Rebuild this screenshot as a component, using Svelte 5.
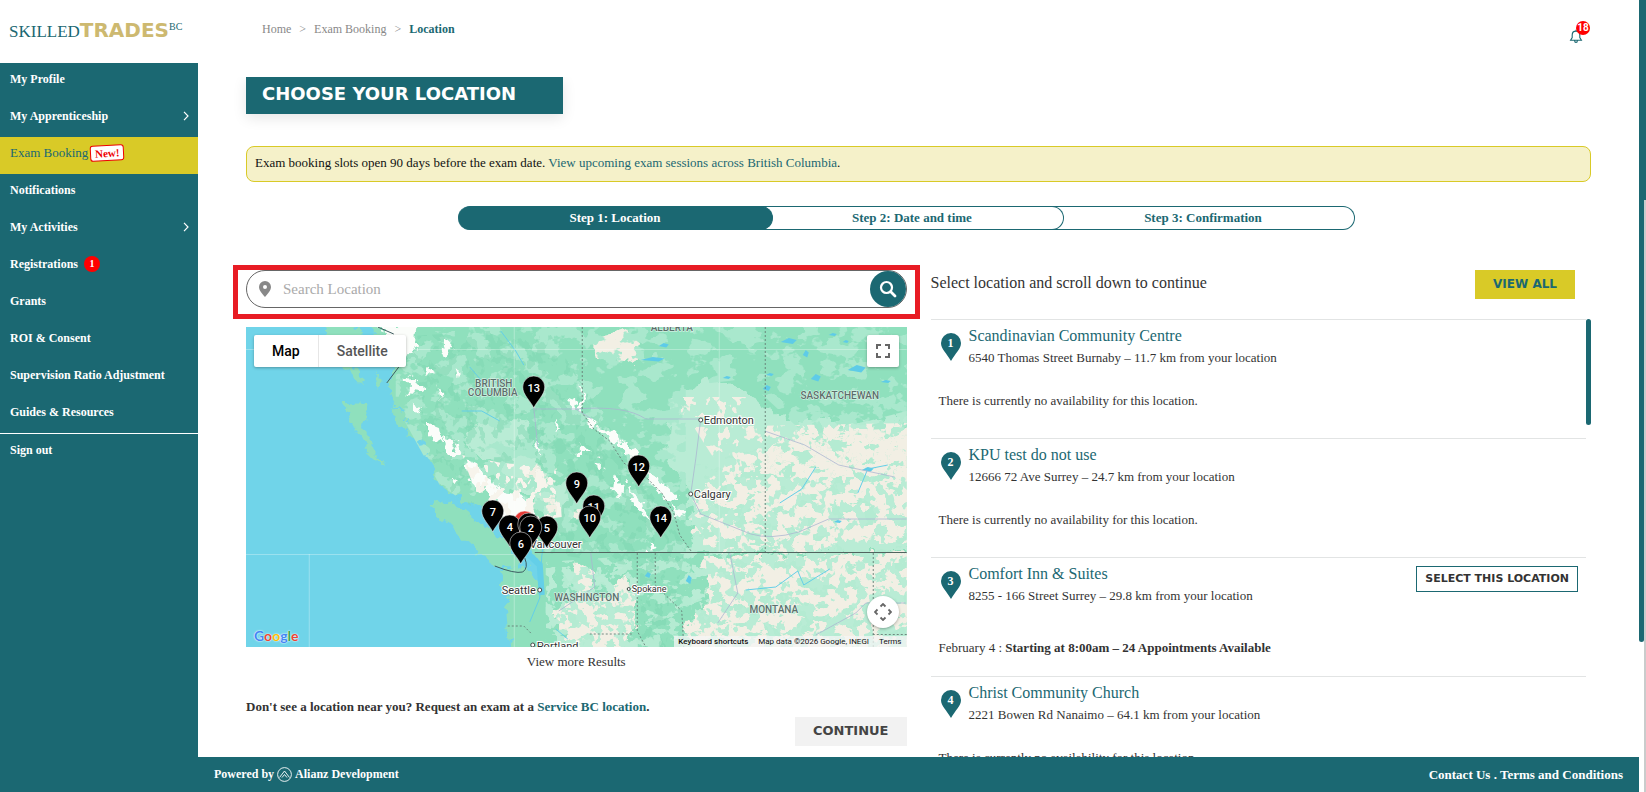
<script lang="ts">
  type NavItem = { label: string; arrow?: boolean; active?: boolean; isNew?: boolean; count?: number };
  type Site = { name: string; address: string; date?: string; slots?: string };
  type Marker = { x: number; y: number; label: string; red?: boolean };

  let search = $state('');
  let mapType = $state('map');
  let selected = $state<number | null>(null);

  const nav: NavItem[] = [
    { label: 'My Profile' },
    { label: 'My Apprenticeship', arrow: true },
    { label: 'Exam Booking', active: true, isNew: true },
    { label: 'Notifications' },
    { label: 'My Activities', arrow: true },
    { label: 'Registrations', count: 1 },
    { label: 'Grants' },
    { label: 'ROI & Consent' },
    { label: 'Supervision Ratio Adjustment' },
    { label: 'Guides & Resources' }
  ];

  const steps = ['Step 1: Location', 'Step 2: Date and time', 'Step 3: Confirmation'];

  const sites: Site[] = [
    { name: 'Scandinavian Community Centre', address: '6540 Thomas Street Burnaby – 11.7 km from your location' },
    { name: 'KPU test do not use', address: '12666 72 Ave Surrey – 24.7 km from your location' },
    { name: 'Comfort Inn & Suites', address: '8255 - 166 Street Surrey – 29.8 km from your location', date: 'February 4', slots: 'Starting at 8:00am – 24 Appointments Available' },
    { name: 'Christ Community Church', address: '2221 Bowen Rd Nanaimo – 64.1 km from your location' }
  ];

  // drawn in order, the last one is on top
  const markers: Marker[] = [
    { x: 288, y: 61, label: '13' },
    { x: 393, y: 140, label: '12' },
    { x: 331, y: 157, label: '9' },
    { x: 348, y: 180, label: '11' },
    { x: 344, y: 191, label: '10' },
    { x: 415, y: 191, label: '14' },
    { x: 247, y: 185, label: '7' },
    { x: 279, y: 196, label: '', red: true },
    { x: 301, y: 201, label: '5' },
    { x: 264, y: 200, label: '4' },
    { x: 283, y: 198, label: '3' },
    { x: 285, y: 201, label: '2' },
    { x: 275, y: 217, label: '6' }
  ];

  const regions = [
    { x: 248, y: 60, text: 'BRITISH' },
    { x: 247, y: 69, text: 'COLUMBIA' },
    { x: 426, y: 4, text: 'ALBERTA' },
    { x: 594, y: 72, text: 'SASKATCHEWAN' },
    { x: 341, y: 274, text: 'WASHINGTON' },
    { x: 528, y: 286, text: 'MONTANA' }
  ];

  const lakes = [[407, 33, 12, 3], [418, 19, 5, 3], [611, 43, 9, 5], [521, 62, 4, 4], [543, 15, 8, 4], [570, 52, 5, 5], [622, 143, 6, 3], [592, 195, 4, 2], [443, 254, 3, 6], [402, 249, 3, 4], [524, 48, 4, 2], [640, 55, 5, 2], [600, 15, 3, 2], [481, 51, 4, 2], [587, 8, 4, 2], [560, 28, 3, 5]];
</script>

<div class="page">
  <aside class="sidebar">
    <a class="logo" href="#home"><span class="logo-skilled">SKILLED</span><span class="logo-trades">TRADES</span><sup>BC</sup></a>
    <nav>
      {#each nav as item}
        <a class="nav-item" class:active={item.active} href="#nav">
          <span>{item.label}</span>
          {#if item.isNew}<span class="new-tag">New!</span>{/if}
          {#if item.count}<span class="count">{item.count}</span>{/if}
          {#if item.arrow}
            <svg class="arrow" width="6" height="10" viewBox="0 0 6 10"><path d="M1 .8 5 5 1 9.2" fill="none" stroke="#fff" stroke-width="1.2" /></svg>
          {/if}
        </a>
      {/each}
      <a class="nav-item sign-out" href="#signout">Sign out</a>
    </nav>
  </aside>

  <div class="body">
    <header class="topbar">
      <div class="crumbs">
        <a href="#home">Home</a><span>&gt;</span><a href="#exam">Exam Booking</a><span>&gt;</span><strong>Location</strong>
      </div>
      <button class="bell" aria-label="Notifications">
        <svg width="14" height="15" viewBox="0 0 14 15" fill="none" stroke="#1b6872" stroke-width="1.1">
          <path d="M7 2.1C4.6 2.1 3.2 3.8 3.2 6v2.6L1.6 11.2h10.8L10.8 8.6V6C10.8 3.8 9.4 2.1 7 2.1zM7 2.1V.8M5.6 11.4c0 2.6 2.8 2.6 2.8 0" />
        </svg>
        <span class="bell-count">18</span>
      </button>
    </header>

    <main>
      <h1>CHOOSE YOUR LOCATION</h1>
      <p class="notice">Exam booking slots open 90 days before the exam date. <a href="#sessions">View upcoming exam sessions across British Columbia</a>.</p>

      <ol class="steps">
        {#each steps as step, i}
          <li class:current={i === 0}>{step}</li>
        {/each}
      </ol>

      <div class="columns">
        <section class="left">
          <div class="search-frame">
            <div class="search">
              <svg width="12" height="16" viewBox="0 0 12 16"><path fill="#888" fill-rule="evenodd" d="M6 0a6 6 0 0 0-6 6c0 3.5 3.6 7.2 6 10 2.4-2.8 6-6.5 6-10a6 6 0 0 0-6-6zm0 4a2 2 0 1 1 0 4 2 2 0 0 1 0-4z" /></svg>
              <input type="text" placeholder="Search Location" aria-label="Search Location" bind:value={search} />
              <button aria-label="Search">
                <svg width="18" height="18" viewBox="0 0 18 18" fill="none" stroke="#fff" stroke-width="2.2"><circle cx="7.5" cy="7.5" r="5.5" /><path stroke-width="2.8" stroke-linecap="round" d="m12 12 4 4" /></svg>
              </button>
            </div>
          </div>

          <div class="map">
            <svg class="map-canvas" viewBox="0 0 661 320" preserveAspectRatio="xMidYMid slice">
              <defs>
                <filter id="rough" x="-5%" y="-5%" width="110%" height="110%">
                  <feTurbulence type="fractalNoise" baseFrequency="0.09" numOctaves="3" seed="4" />
                  <feDisplacementMap in="SourceGraphic" scale="17" xChannelSelector="R" yChannelSelector="G" />
                </filter>
                <filter id="patch" x="0" y="0" width="100%" height="100%">
                  <feTurbulence type="fractalNoise" baseFrequency="0.045 0.06" numOctaves="4" seed="12" />
                  <feColorMatrix values="0 0 0 0 0  0 0 0 0 0  0 0 0 0 0  24 0 0 0 -12.5" result="n" />
                  <feComposite in="SourceGraphic" in2="n" operator="in" />
                </filter>
                <filter id="sparse" x="0" y="0" width="100%" height="100%">
                  <feTurbulence type="fractalNoise" baseFrequency="0.06 0.09" numOctaves="4" seed="8" />
                  <feColorMatrix values="0 0 0 0 0  0 0 0 0 0  0 0 0 0 0  24 0 0 0 -13.2" result="n" />
                  <feComposite in="SourceGraphic" in2="n" operator="in" />
                </filter>
                <filter id="speck" x="0" y="0" width="100%" height="100%">
                  <feTurbulence type="fractalNoise" baseFrequency="0.1 0.08" numOctaves="3" seed="31" />
                  <feColorMatrix values="0 0 0 0 0  0 0 0 0 0  0 0 0 0 0  0 24 0 0 -13" result="n" />
                  <feComposite in="SourceGraphic" in2="n" operator="in" />
                </filter>
              </defs>

              <rect width="661" height="320" fill="#70d4e9" />
              <g filter="url(#rough)">
                <path fill="#8fe0bd" d="M128-10 128 8 141 24 148 40 142 56 150 78 164 96 175 112 186 136 194 158 218 172 242 182 262 198 282 218 294 236 292 252 286 246 272 240 253 244 258 262 262 282 266 330 670 330V-10z" />
                <path fill="#8fe0bd" d="M97 75 122 76 118 98 126 118 137 140 124 128 108 98zM184 175 200 177 218 184 240 198 258 212 276 232 274 241 252 240 232 226 214 208 196 190zM76-2h34l4 14-24 2zM98 38l16 2 3 15-12-2zM112 10l14 4-2 26-10-8zM128 42l8 12-4 10zM148 78l16 20 6 14-10-4-14-22zM88 22l12 6-4 8z" />
                <path fill="#b9ecd5" d="M216 104 246 92 282 96 290 130 306 160 324 150 330 190 306 200 286 170 262 158 246 132 224 128zM424 72 462 52 500 64 540 92 600 92 661 98V225H450L444 190 444 166 420 130z" />
              </g>
              <path d="M200 171 222 176 250 194 272 214" fill="none" stroke="#70d4e9" stroke-width="3" filter="url(#rough)" />
              <g filter="url(#rough)" fill="#f2efe4">
                <path d="M346 10 376 2 394 12 390 38 366 32 350 26zM450 168 470 150 500 142 516 128 548 110 600 104 670 98V214L600 218 560 224 470 222 446 202z" />
                <path d="M324 234 346 240 348 276 380 250 392 272 388 304 372 324 328 330 316 300 306 282 332 272zM458 230 670 226V330H450L440 302 462 276zM296 170l14 0 4 14-12 2zM276 142l18-2 8 14-6 12-10-10zM326 172l12 4-2 18-8-6z" />
              </g>

              <path filter="url(#patch)" fill="#a9e8cd" d="M150 0H440V225H294L194 158 150 78z" />
              <path filter="url(#patch)" fill="#a9e8cd" d="M430 0H661V100L560 108 500 52 430 60z" />
              <path filter="url(#sparse)" fill="#b4ebd2" d="M440 225V140L661 84V320H300V235z" />
              <path filter="url(#speck)" fill="#b9ecd5" d="M446 225V140L661 84V225z" />
              <path filter="url(#speck)" fill="#7dd6b0" d="M150 10 300 0 440 220 420 320 396 320 394 240 294 225 194 158z" opacity=".45" />
              <path filter="url(#speck)" fill="#b9ecd5" d="M446 226H661V320H446zM300 240H392V320H300z" />
              <path filter="url(#speck)" fill="#f2efe4" d="M448 100 661 96V150H480zM430 70H500V90H430z" />

              <!-- coastal range and Rockies -->
              <g filter="url(#rough)" fill="#fbfdfa">
                <path d="M124-4 172-2 170 22 158 28 148 12zM162 50l12 6 2 12-14-2zM184 96l10 4 2 16-10-4zM196 110l14 4 4 16-12 0zM220 132l14 6 8 24-18-6zM236 148l16 8 12 20-12 2-14-14zM252 164l22 4 14 14-4 18-24-4-10-18zM199 12l10 10-8 8-4-10zM168 74l9 4-4 12zM290 112l7 6-2 10zM334 52l5 32-5-2zM180 38l8 4-2 8zM192 56l7 6-4 8zM210 40l6 4-4 8zM206 148l6 4-4 6z" />
                <path d="M348 100l18 2 12 12-10 4zM374 114l16 8 8 16-14-2zM400 144l16 10 16 16-8 4-22-18zM370 148l8 10-2 16-8-8zM382 162l14 10 6 20-12-10zM426 172l10 14-2 8zM322 72l10 4-4 8zM334 118l10 10-10 0zM400 212l10 10-6 2zM340 92l10 4-6 6zM310 96l7 4-5 4zM352 134l7 6-6 4z" />
              </g>
              <path filter="url(#speck)" fill="#f7f4ec" d="M216 128 256 136 312 140 316 190 270 196 232 170z" />

              <g fill="#5ecbe8">
                {#each lakes as [x, y, w, h]}
                  <path d="M{x - w} {y}l{w} {-h} {w} {h / 2} {-w / 2} {h}z" />
                {/each}
              </g>
              <g fill="none" stroke="#64cfe8" stroke-width="1">
                <path d="M255 4 270 24 278 38M224 40l24 28M216 84l20 0 18 10M500 263l30-3 22-16 6 14 26-16M570 140l-14 22-22 14M612 166l10-24 20-4M322 312l-12-10M300 205l-4 24-2 42-10 24" />
                <path stroke-width="6" d="M277 222 294 238 296 268" />
              </g>
              <g fill="none" stroke="#a9b4d0" stroke-width="1" opacity=".75">
                <path d="M330 82q50-4 70 10H455l-5 40-5 35 10 20 50 20q20 6 48-2l30-13H661M519 104l40 14 34 20 56 12M288 82l42 0 16 10M484 226l8 40-20 30M570 308l40-22 10-10h40M288 80l4 40M345 226l4 34-36 24" />
              </g>

              <g fill="none" stroke="#fff" opacity=".3">
                <path d="M0 22.500H661M63.500 227V320M0 227.500H268M268.500 0V320M473.500 0V225" />
              </g>
              <g fill="none" stroke="#667e76" stroke-width=".9" stroke-dasharray="2 2">
                <path d="M519.500 0V225M336.500 0V86L348 102 364 114 378 136 400 150 416 166 428 186 434 208 446 225M391.500 226V304L400 320M409.500 226V258L436 284 438 320M627.500 226V320M627 307.500H661M262 299h16l8 8M344 307h44" />
              </g>
              <path d="M289 225.500H661" stroke="#52645f" />
              <path d="M249 239q20 8 28 6 6-4 2-14M141 56l12-16M132 0l16 7" fill="none" stroke="#3d5c61" />

              <g class="region">
                {#each regions as r}<text x={r.x} y={r.y}>{r.text}</text>{/each}
              </g>
              <g class="city">
                <text x="458" y="97">Edmonton</text>
                <text x="448" y="171">Calgary</text>
                <text x="256" y="267">Seattle</text>
                <text x="284" y="221">Vancouver</text>
                <text x="291" y="323">Portland</text>
                <text class="small" x="386" y="265">Spokane</text>
              </g>
              <g fill="#fff" stroke="#4a4a4a">
                <circle cx="455" cy="93" r="2" /><circle cx="445" cy="167" r="2" /><circle cx="294" cy="263" r="2" /><circle cx="383" cy="262" r="1.5" /><circle cx="287" cy="318" r="2" />
              </g>

              {#each markers as m}
                <g class="marker" transform="translate({m.x} {m.y})">
                  <path d="M0 20C-3 13-11 7-11-1a11 11 0 0 1 22 0c0 8-8 14-11 21z" fill={m.red ? '#e53935' : '#000'} stroke="#fff" stroke-width=".5" />
                  <text y="4">{m.label}</text>
                </g>
              {/each}
            </svg>

            <div class="map-type">
              <button class:on={mapType === 'map'} onclick={() => (mapType = 'map')}>Map</button>
              <button class:on={mapType === 'satellite'} onclick={() => (mapType = 'satellite')}>Satellite</button>
            </div>
            <button class="fullscreen" aria-label="Toggle fullscreen view">
              <svg width="14" height="14" viewBox="0 0 14 14" fill="none" stroke="#666" stroke-width="2"><path d="M1 5V1h4M9 1h4v4M13 9v4H9M5 13H1V9" /></svg>
            </button>
            <button class="camera" aria-label="Map camera controls">
              <svg width="18" height="18" viewBox="0 0 18 18" fill="none" stroke="#666" stroke-width="1.8"><path d="M6.5 3.5 9 1l2.500 2.500M6.500 14.500 9 17l2.500-2.500M3.500 6.500 1 9l2.500 2.500M14.500 6.500 17 9l-2.500 2.500" /></svg>
            </button>
            <span class="google"><span class="b">G</span><span class="r">o</span><span class="y">o</span><span class="b">g</span><span class="g">l</span><span class="r">e</span></span>
            <div class="map-legal">
              <button>Keyboard shortcuts</button>
              <span>Map data ©2026 Google, INEGI</span>
              <a href="#terms">Terms</a>
            </div>
          </div>

          <button class="more">View more Results</button>
          <p class="missing">Don't see a location near you? Request an exam at a <a href="#servicebc">Service BC location</a>.</p>
          <button class="continue">CONTINUE</button>
        </section>

        <section class="right">
          <div class="list-head">
            <h2>Select location and scroll down to continue</h2>
            <button class="view-all">VIEW ALL</button>
          </div>
          <div class="list-wrap">
            <ul>
              {#each sites as site, i}
                <li class:chosen={selected === i}>
                  <div class="site">
                    <span class="pin">
                      <svg width="20" height="28" viewBox="0 0 20 28"><path fill="#1b6872" d="M10 0A10 10 0 0 0 0 10c0 6 5.500 10 10 18 4.500-8 10-12 10-18A10 10 0 0 0 10 0z" /></svg>
                      <b>{i + 1}</b>
                    </span>
                    <div class="site-text">
                      <h3>{site.name}</h3>
                      <p>{site.address}</p>
                    </div>
                    {#if site.slots}
                      <button class="select" onclick={() => (selected = i)}>SELECT THIS LOCATION</button>
                    {/if}
                  </div>
                  {#if site.slots}
                    <p class="status open">{site.date} : <strong>{site.slots}</strong></p>
                  {:else}
                    <p class="status">There is currently no availability for this location.</p>
                  {/if}
                </li>
              {/each}
            </ul>
            <span class="list-thumb"></span>
          </div>
        </section>
      </div>
    </main>

    <footer>
      <span class="powered">Powered by
        <svg width="15" height="15" viewBox="0 0 15 15" fill="none" stroke="#fff" stroke-width=".9"><circle cx="7.5" cy="7.5" r="6.900" /><path d="M2.500 10.500 7.500 4l5 6.500M5 10.500l2.500-3 2.500 3" /></svg>
        Alianz Development</span>
      <span class="legal"><a href="#contact">Contact Us</a> . <a href="#conditions">Terms and Conditions</a></span>
    </footer>
  </div>

  <div class="rail"><span class="rail-thumb"></span><span class="rail-edge"></span></div>
</div>

<style>
  :global(body) { background: #fff; }
  .page {
    --teal: #1b6872;
    --lime: #d9ca27;
    display: flex;
    height: 100vh;
    overflow: hidden;
    font-family: "Liberation Serif", serif;
    font-size: 13px;
    color: #333;
  }
  a { color: inherit; text-decoration: none; }
  h1, h2, h3, p, ul, ol { margin: 0; padding: 0; }
  ul, ol { list-style: none; }
  button { padding: 0; border: none; background: none; font: inherit; color: inherit; cursor: pointer; }

  /* Sidebar */
  .sidebar {
    display: flex;
    flex-direction: column;
    width: 198px;
    flex-shrink: 0;
    background: var(--teal);
  }
  .logo {
    display: flex;
    align-items: baseline;
    height: 43px;
    padding: 20px 0 0 9px;
    line-height: 22px;
    background: #fff;
    color: var(--teal);
  }
  .logo-skilled { font-size: 17px; }
  .logo-trades {
    font-family: "DejaVu Sans", sans-serif;
    font-size: 20px;
    font-weight: 700;
    line-height: 20px;
    color: #cdb970;
  }
  .logo sup { align-self: flex-start; font-size: 10px; line-height: 14px; }
  .nav-item {
    display: flex;
    align-items: center;
    height: 32px;
    padding: 0 9px 5px 10px;
    font-size: 12px;
    font-weight: 700;
    color: #fff;
  }
  .nav-item.active { background: var(--lime); color: var(--teal); font-size: 13px; font-weight: 400; }
  .arrow { margin-left: auto; }
  .new-tag {
    margin-left: 2px;
    padding: 0 4px;
    border: 1px solid #e00;
    border-radius: 3px;
    background: #fff;
    color: #e00;
    font-size: 11px;
    font-weight: 700;
    line-height: 14px;
    transform: rotate(-3deg);
  }
  .count {
    width: 16px;
    margin-left: 6px;
    border-radius: 50%;
    background: #f00;
    font-size: 10px;
    line-height: 16px;
    text-align: center;
  }
  .sign-out { border-top: 1px solid #fff; }

  /* Header */
  .body { display: flex; flex-direction: column; flex: 1; min-width: 0; }
  .topbar {
    display: flex;
    justify-content: space-between;
    align-items: flex-start;
    height: 57px;
    padding: 20px 48px 0 64px;
  }
  .crumbs { display: flex; gap: 8px; font-size: 12px; line-height: 18px; color: #888; }
  .crumbs strong { color: var(--teal); }
  .bell { position: relative; width: 16px; height: 15px; margin: 9px 6px 0 0; text-align: left; }
  .bell svg { display: block; }
  .bell-count {
    position: absolute;
    top: -8px;
    left: 7px;
    width: 14px;
    border-radius: 50%;
    background: #f00;
    color: #fff;
    font: 700 10px/14px Roboto, sans-serif;
    text-align: center;
  }

  main { flex: 1; min-height: 0; padding: 0 48px; overflow: hidden; }
  h1 {
    width: 301px;
    height: 37px;
    padding-left: 16px;
    background: var(--teal);
    box-shadow: 0 4px 14px rgba(0, 0, 0, .1);
    color: #fff;
    font: 700 18px/34px "DejaVu Sans", sans-serif;
  }
  .notice {
    margin-top: 32px;
    padding: 0 8px 2px;
    border: 1px solid var(--lime);
    border-radius: 8px;
    background: #f5f1c9;
    color: #111;
    line-height: 32px;
  }
  .notice a { color: var(--teal); }
  .steps { display: flex; margin: 24px 236px 0 212px; }
  .steps li {
    flex: 1;
    position: relative;
    z-index: 1;
    margin-left: -12px;
    border: 1px solid var(--teal);
    border-left: none;
    border-radius: 0 12px 12px 0;
    color: var(--teal);
    font-weight: 700;
    line-height: 22px;
    text-align: center;
  }
  .steps .current {
    flex: 0 0 35%;
    z-index: 2;
    margin-left: 0;
    border-radius: 12px;
    background: var(--teal);
    color: #fff;
  }

  .columns { display: grid; grid-template-columns: 1fr 1fr; gap: 24px; margin-top: 35px; }
  .left { display: flex; flex-direction: column; min-width: 0; }

  /* Search */
  .search-frame { margin: 0 -13px; padding: 0 8px 6px; border: 5px solid #e81c24; }
  .search {
    display: flex;
    align-items: center;
    height: 36px;
    padding-left: 12px;
    border: 1px solid #666;
    border-radius: 19px;
  }
  .search input {
    flex: 1;
    min-width: 0;
    margin-left: 12px;
    padding: 0;
    border: none;
    outline: none;
    background: none;
    font: 15px "Liberation Serif", serif;
  }
  .search input::placeholder { color: #aaa; }
  .search button {
    display: flex;
    align-items: center;
    justify-content: center;
    width: 36px;
    height: 36px;
    border-radius: 50%;
    background: var(--teal);
  }

  /* Map */
  .map {
    position: relative;
    height: 320px;
    margin-top: 8px;
    overflow: hidden;
    font-family: Roboto, sans-serif;
  }
  .map-canvas { display: block; width: 100%; height: 100%; }
  .region text {
    fill: #5c6f6b;
    stroke: #e4f6ee;
    stroke-width: 1px;
    paint-order: stroke;
    font-size: 10px;
    font-weight: 500;
    text-anchor: middle;
  }
  .city text {
    fill: #333;
    stroke: #fff;
    stroke-width: 2px;
    paint-order: stroke;
    font-size: 11px;
  }
  .city .small { font-size: 9px; }
  .marker text { fill: #fff; font-size: 11px; font-weight: 500; text-anchor: middle; }
  .map-type {
    position: absolute;
    top: 8px;
    left: 8px;
    display: flex;
    border-radius: 2px;
    background: #fff;
    box-shadow: 0 1px 3px rgba(0, 0, 0, .3);
  }
  .map-type button { padding: 0 18px; color: #565656; font-size: 14px; font-weight: 500; line-height: 32px; }
  .map-type button + button { border-left: 1px solid #e6e6e6; }
  .map-type .on { color: #000; }
  .fullscreen, .camera {
    position: absolute;
    right: 8px;
    display: flex;
    align-items: center;
    justify-content: center;
    width: 32px;
    height: 32px;
    background: #fff;
    box-shadow: 0 1px 3px rgba(0, 0, 0, .3);
  }
  .fullscreen { top: 8px; border-radius: 2px; }
  .camera { bottom: 19px; border-radius: 50%; }
  .google {
    position: absolute;
    left: 8px;
    bottom: 2px;
    font: 700 14px/18px Lato, sans-serif;
    text-shadow: 0 0 1px #fff, 0 0 2px #fff;
  }
  .google .b { color: #4285f4; }
  .google .r { color: #ea4335; }
  .google .y { color: #fbbc05; }
  .google .g { color: #34a853; }
  .map-legal {
    position: absolute;
    right: 0;
    bottom: 0;
    display: flex;
    gap: 10px;
    padding: 0 5px 0 4px;
    background: rgba(245, 245, 245, .75);
    color: #111;
    font-size: 8px;
    line-height: 11px;
  }
  .map-legal button { font-weight: 500; }

  .more { align-self: center; margin-top: 6px; font-size: 13px; line-height: 18px; }
  .missing { margin-top: 27px; font-weight: 700; line-height: 18px; }
  .missing a { color: var(--teal); }
  .continue {
    align-self: flex-end;
    margin-top: 1px;
    padding: 0 18px 1px;
    background: #f2f2f2;
    color: #444;
    font: 700 13px/28px "DejaVu Sans", sans-serif;
  }

  /* Location list */
  .list-head {
    display: flex;
    justify-content: space-between;
    align-items: flex-start;
    height: 49px;
    padding: 5px 16px 0 0;
  }
  h2 { font-size: 16px; font-weight: 400; line-height: 26px; }
  .view-all {
    padding: 0 18px 1px;
    background: var(--lime);
    color: var(--teal);
    font: 700 12px/28px "DejaVu Sans", sans-serif;
  }
  .list-wrap { display: flex; }
  .list-wrap ul { flex: 1; min-width: 0; }
  .list-wrap li { height: 118px; border-top: 1px solid #e2e4e4; }
  .site { display: flex; height: 60px; padding: 6px 8px 0 10px; gap: 8px; }
  .pin { position: relative; margin-top: 7px; width: 20px; height: 28px; }
  .pin b {
    position: absolute;
    inset: 0;
    color: #fff;
    font-size: 12px;
    line-height: 20px;
    text-align: center;
  }
  .site-text { flex: 1; min-width: 0; }
  h3 { color: var(--teal); font-size: 16px; font-weight: 400; line-height: 20px; }
  .site-text p { padding-top: 3px; line-height: 18px; }
  .select {
    align-self: flex-start;
    margin-top: 2px;
    padding: 0 8px;
    border: 1px solid var(--teal);
    font: 700 11px/24px "DejaVu Sans", sans-serif;
  }
  .status { margin: 6px 0 0 8px; line-height: 18px; }
  .status.open { margin-top: 15px; }
  .list-thumb { width: 5px; height: 106px; border-radius: 3px; background: var(--teal); }

  footer {
    display: flex;
    justify-content: space-between;
    padding: 0 16px;
    background: var(--teal);
    color: #fff;
    font-size: 12px;
    font-weight: 700;
    line-height: 35px;
  }
  .powered { display: flex; align-items: center; gap: 3px; }
  .legal { font-size: 13px; }

  /* Page scrollbar */
  .rail { display: flex; flex-shrink: 0; width: 7px; background: #fff; }
  .rail-thumb { width: 5px; height: 81%; border-radius: 0 0 3px 3px; background: var(--teal); }
  .rail-edge { width: 2px; background: linear-gradient(#1b6872 200px, #c9cccc 200px); }
</style>
